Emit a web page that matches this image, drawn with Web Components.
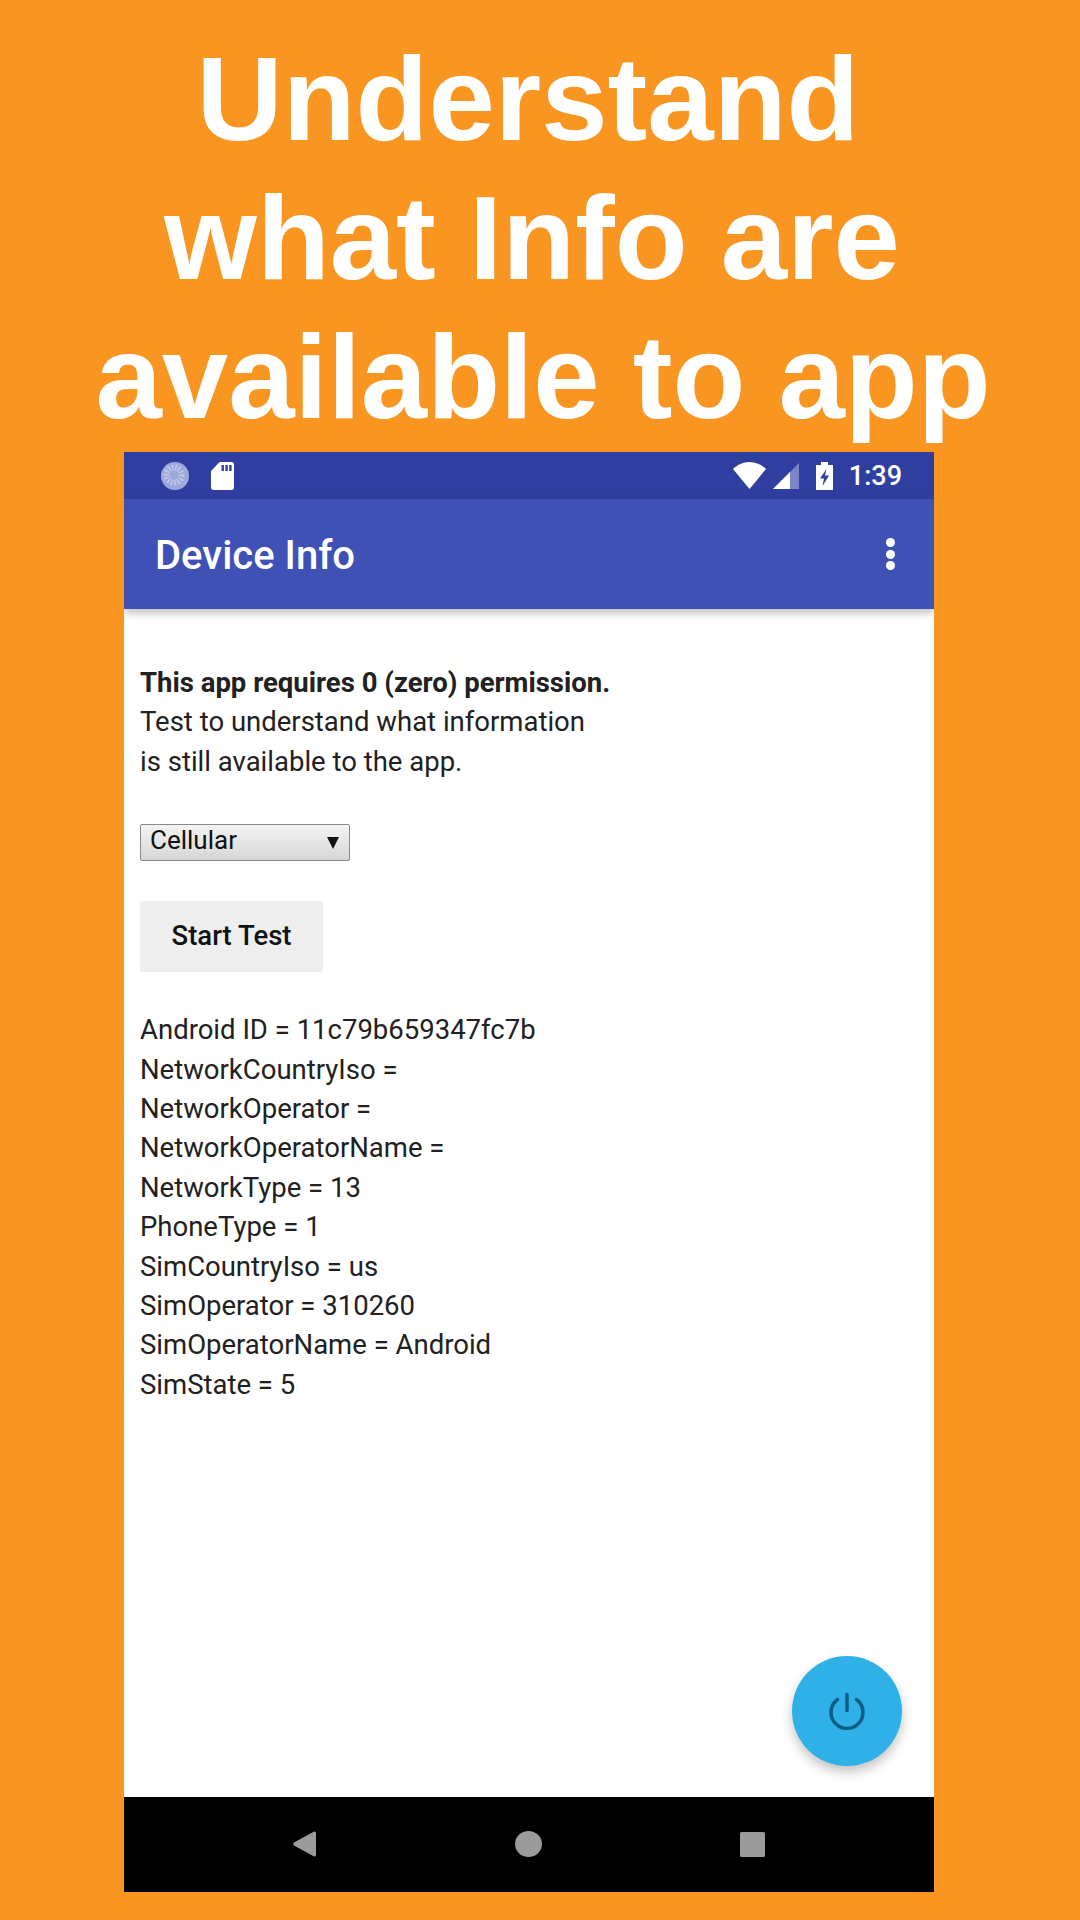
<!DOCTYPE html>
<html><head><meta charset="utf-8">
<style>html,body{margin:0;padding:0;background:#f99521}body{width:1080px;height:1920px;overflow:hidden;font-family:"Liberation Sans",sans-serif}</style>
</head><body>
<promo-screen>
<promo-headline></promo-headline>
<phone-frame>
<status-bar></status-bar>
<app-bar>Device Info</app-bar>
<info-content></info-content>
<nav-bar></nav-bar>
</phone-frame>
</promo-screen>
<script>
function def(name, html){
  customElements.define(name, class extends HTMLElement{
    constructor(){super();this.attachShadow({mode:'open'}).innerHTML=html;}
  });
}
def('promo-screen',`<style>:host{display:flex;flex-direction:column;width:1080px;height:1920px;background:#f99521}</style><slot></slot>`);
def('promo-headline',`<style>
:host{display:flex;flex-direction:column;height:452px;flex:none;box-sizing:border-box;padding-top:29px;color:#fff;font:700 119.300px/139px "Liberation Sans",Arial,sans-serif;text-align:center;white-space:nowrap}
div{width:1080px;box-sizing:border-box}
.a{padding-right:24px}.b{padding-right:16px}.c{padding-left:6px}
</style><div class="a">Understand</div><div class="b">what Info are</div><div class="c">available to app</div>`);
def('phone-frame',`<style>:host{display:flex;flex-direction:column;width:810px;height:1440px;margin-left:124px;background:#fff;overflow:hidden}</style><slot></slot>`);
def('status-bar',`<style>
:host{display:flex;align-items:center;height:47px;background:#303f9f;color:#fff;font:500 27px Roboto,sans-serif;box-sizing:border-box;padding:0 32px 0 37px;flex:none}
svg{display:block}
.sp{flex:1}
.l{display:flex;align-items:center;gap:22px}
.r{display:flex;align-items:center}
</style>
<div class="l">
<svg width="28" height="28" viewBox="0 0 28 28"><circle cx="14" cy="14" r="14" fill="#9fa8da"/><path d="M26 6a14 14 0 0 1-20 19.500a14 14 0 0 0 20-19.500z" fill="#fff"/><circle cx="13" cy="13" r="7.500" fill="none" stroke="#c5cae9" stroke-width="6" stroke-dasharray="1.500 1.800"/></svg>
<svg width="23" height="28" viewBox="0 0 24 28" preserveAspectRatio="none"><path d="M9 0h12a3 3 0 0 1 3 3v22a3 3 0 0 1-3 3H3a3 3 0 0 1-3-3V9z" fill="#fff"/><path d="M11 3h2.500v6H11zM15 3h2.500v6H15zM19 3h2.500v6H19z" fill="#303f9f"/></svg>
</div>
<div class="sp"></div>
<div class="r">
<svg width="33" height="27" viewBox="0 0 33 27" style="margin-right:7px"><path d="M16.500 27L0 7C4 3 10 0 16.500 0S29 3 33 7z" fill="#fff"/></svg>
<svg width="26" height="26" viewBox="0 0 26 26" style="margin-right:17px"><path d="M26 0v26H0z" fill="#7c86c6"/><path d="M17 9v17H0z" fill="#fff"/></svg>
<svg width="17" height="28" viewBox="0 0 17 28" style="margin-right:16px"><path d="M5 0h7v3h5v25H0V3h5z" fill="#fff"/><path d="M10.500 7L4 16.500h4l-1.500 7.500 6.500-10.500H9z" fill="#303f9f"/></svg>
<span>1:39</span>
</div>`);
def('app-bar',`<style>
:host{display:flex;align-items:center;flex:none;height:110px;background:#3f51b5;color:#fff;font:500 40px Roboto,sans-serif;padding:0 39px 0 31px;box-sizing:border-box;justify-content:space-between;box-shadow:0 4px 8px rgba(0,0,0,.25);position:relative;z-index:1}
span{padding-top:3px}
.m{display:flex;flex-direction:column;gap:2.500px}.m i{width:9px;height:9px;border-radius:50%;background:#fff;display:block}
</style><span><slot></slot></span><div class="m"><i></i><i></i><i></i></div>`);
def('info-content',`<style>
:host{display:block;flex:1;box-sizing:border-box;padding:54px 16px 0;font:400 27.500px/39.400px Roboto,sans-serif;color:#212121;position:relative}
b{font-weight:700}
.sel{display:flex;align-items:center;justify-content:space-between;box-sizing:border-box;width:210px;height:37px;margin-top:43px;padding:0 10px 5px 9px;border:1px solid #8a8a8a;border-radius:2px;background:linear-gradient(#f4f4f4,#d6d6d6);color:#111;font:400 26px/32px Roboto,sans-serif}
.sel i{width:0;height:0;border-left:6.500px solid transparent;border-right:6.500px solid transparent;border-top:12px solid #111;margin-top:5px}
.btn{display:flex;align-items:center;justify-content:center;width:183px;height:71px;margin-top:40px;background:#eeeeee;border-radius:3px;color:#111;font:500 27.500px Roboto,sans-serif;padding-bottom:3px;box-sizing:border-box}
.list{margin-top:38px}
.fab{position:absolute;right:32px;bottom:31px;width:110px;height:110px;border-radius:50%;background:#2fb1e8;box-shadow:0 6px 12px rgba(0,0,0,.24);display:flex;align-items:center;justify-content:center}
</style>
<div><b>This app requires 0 (zero) permission.</b><br>Test to understand what information<br>is still available to the app.</div>
<div class="sel"><span>Cellular</span><i></i></div>
<div class="btn">Start Test</div>
<div class="list">Android ID = 11c79b659347fc7b<br>NetworkCountryIso =<br>NetworkOperator =<br>NetworkOperatorName =<br>NetworkType = 13<br>PhoneType = 1<br>SimCountryIso = us<br>SimOperator = 310260<br>SimOperatorName = Android<br>SimState = 5</div>
<div class="fab"><svg width="40" height="40" viewBox="0 0 40 40" fill="none" stroke="#0b5d86" stroke-width="3.500" stroke-linecap="round"><path d="M20 3.500v16"/><path d="M10.500 8.500a16 16 0 1 0 19 0"/></svg></div>`);
def('nav-bar',`<style>
:host{display:flex;flex:none;height:95px;background:#000;align-items:flex-start;box-sizing:border-box;padding:34px 0 0 169px}
svg{display:block}
</style>
<svg width="23" height="26" viewBox="0 0 23 26"><path d="M23 2v22a1.500 1.500 0 0 1-2.300 1.200L1 14.500a1.800 1.800 0 0 1 0-3L20.700.8A1.500 1.500 0 0 1 23 2z" fill="#9b9b9b"/></svg>
<svg style="margin-left:199px" width="27" height="26" viewBox="0 0 27 26"><ellipse cx="13.500" cy="13" rx="13.500" ry="13" fill="#9b9b9b"/></svg>
<svg style="margin-left:198px;margin-top:1px" width="25" height="25" viewBox="0 0 25 25"><rect width="25" height="25" rx="1.500" fill="#9b9b9b"/></svg>`);
</script>
</body></html>
